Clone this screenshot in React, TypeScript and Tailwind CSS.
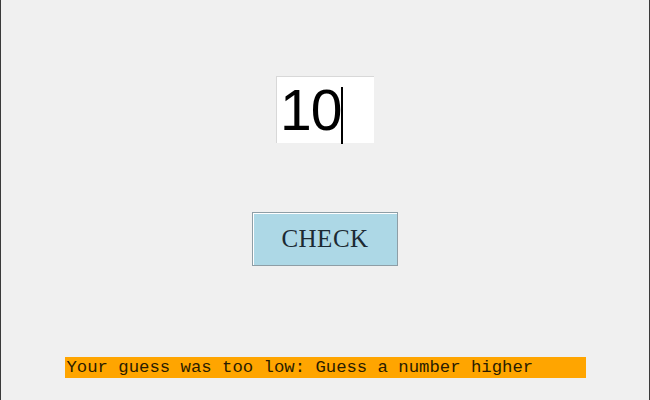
export default function App() {
  return (
    <div className="w-[650px] h-[400px] bg-[#f0f0f0] border-x border-[#3a3a3a] flex flex-col items-center overflow-hidden">
      {/* guess entry */}
      <div className="mt-[76px] w-[98px] h-[67px] bg-white border-l border-t border-[#d8d8d8] flex items-center pl-[3px]">
        <span
          className="text-[57px] leading-none text-black tracking-[-1px]"
          style={{ fontFamily: '"Liberation Sans", Arial, sans-serif' }}
        >
          10
        </span>
        <span className="w-[2px] h-[57px] bg-black mt-[10px]" />
      </div>

      <button
        className="mt-[69px] w-[146px] h-[54px] bg-[#add8e6] border border-[#8e9ea6] shadow-[inset_1px_1px_0_#ffffff] text-[25px] text-[#1c2a33] tracking-[0.5px]"
        style={{ fontFamily: '"Liberation Serif", "Times New Roman", serif' }}
      >
        CHECK
      </button>

      <div
        className="mt-[91px] w-[521px] h-[21px] bg-[#ffa500] text-[17.3px] leading-[22px] text-[#2a1c00] pl-[2px] whitespace-pre"
        style={{ fontFamily: '"Liberation Mono", "Courier New", monospace' }}
      >
        Your guess was too low: Guess a number higher
      </div>
    </div>
  );
}
